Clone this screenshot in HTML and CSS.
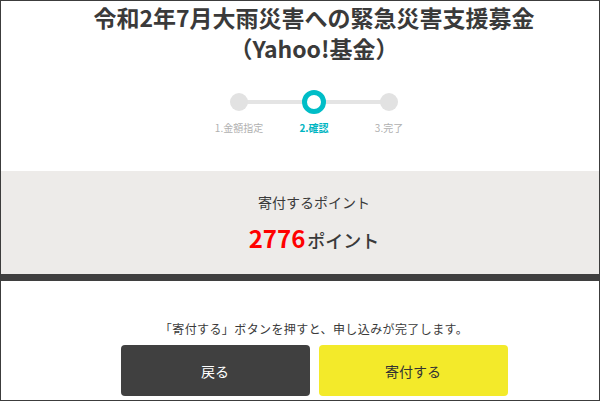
FILE: index.html
```html
<!DOCTYPE html>
<html lang="ja">
<head>
<meta charset="utf-8">
<link rel="stylesheet" href="styles.css">
</head>
<body>
<div class="frame">
  <header class="head">
    <h1 class="title">令和2年7月大雨災害への緊急災害支援募金<br>（Yahoo!基金）</h1>
    <div class="stepper">
      <div class="track"></div>
      <div class="step">
        <span class="dot"></span>
        <span class="label">1.金額指定</span>
      </div>
      <div class="step current">
        <span class="dot"></span>
        <span class="label">2.確認</span>
      </div>
      <div class="step">
        <span class="dot"></span>
        <span class="label">3.完了</span>
      </div>
    </div>
  </header>
  <section class="points">
    <p class="points-label">寄付するポイント</p>
    <p class="points-value"><span class="num">2776</span><span class="unit">ポイント</span></p>
  </section>
  <section class="confirm">
    <p class="note">「寄付する」ボタンを押すと、申し込みが完了します。</p>
    <div class="buttons">
      <button class="btn btn-back">戻る</button>
      <button class="btn btn-donate">寄付する</button>
    </div>
  </section>
</div>
</body>
</html>
```

FILE: styles.css
```css
* { box-sizing: border-box; }
html, body {
  margin: 0;
  padding: 0;
  background: #fff;
}
body {
  font-family: "Noto Sans CJK JP", "Noto Sans", sans-serif;
  color: #333;
}
.frame {
  width: 600px;
  height: 401px;
  border: 1px solid #3c3c3c;
  overflow: hidden;
  background: #fff;
}
.head {
  padding: 1px 0 0 28px;
}
.title {
  margin: 0;
  text-align: center;
  font-size: 23px;
  line-height: 31px;
  font-weight: 700;
  color: #3a3a3a;
  letter-spacing: 0;
}
.stepper {
  position: relative;
  display: grid;
  grid-template-columns: repeat(3, 75px);
  justify-content: center;
  margin-top: 26px;
  height: 81px;
}
.track {
  position: absolute;
  top: 10px;
  left: calc(50% - 75px);
  width: 150px;
  height: 4px;
  background: #e4e4e4;
}
.step {
  position: relative;
  display: flex;
  flex-direction: column;
  align-items: center;
}
.dot {
  width: 18px;
  height: 18px;
  margin-top: 3px;
  border-radius: 50%;
  background: #e2e2e2;
}
.step.current .dot {
  width: 24px;
  height: 24px;
  margin-top: 0;
  background: #fff;
  border: 5px solid #00bdc7;
}
.label {
  margin-top: 7px;
  font-size: 10px;
  line-height: 14px;
  color: #b0b0b0;
  white-space: nowrap;
}
.step:nth-child(2) .label,
.step:nth-child(4) .label {
  margin-top: 10px;
}
.step.current .label {
  color: #00b5c2;
  font-weight: 700;
}
.points {
  background: #edebe9;
  border-bottom: 7px solid #3f3f3f;
  padding: 21px 0 0 28px;
  height: 110px;
  text-align: center;
}
.points-label {
  margin: 0;
  font-size: 14px;
  line-height: 20px;
  color: #3a3a3a;
}
.points-value {
  margin: 11px 0 0;
  line-height: 30px;
  display: flex;
  justify-content: center;
  align-items: baseline;
}
.num {
  font-size: 24px;
  font-weight: 700;
  color: #ff0000;
  margin-right: 2px;
}
.unit {
  font-size: 18px;
  font-weight: 500;
  color: #3a3a3a;
}
.confirm {
  padding: 39px 0 0 28px;
  text-align: center;
}
.note {
  margin: 0;
  font-size: 12px;
  line-height: 18px;
  letter-spacing: 0.4px;
  color: #3a3a3a;
}
.buttons {
  display: flex;
  justify-content: center;
  gap: 9px;
  margin-top: 7px;
}
.btn {
  width: 189px;
  height: 51px;
  border: none;
  border-radius: 4px;
  font-family: inherit;
  font-size: 14px;
  padding: 0;
  cursor: pointer;
}
.btn-back {
  background: #404040;
  color: #fff;
}
.btn-donate {
  background: #f3ea2a;
  color: #333;
}
```
